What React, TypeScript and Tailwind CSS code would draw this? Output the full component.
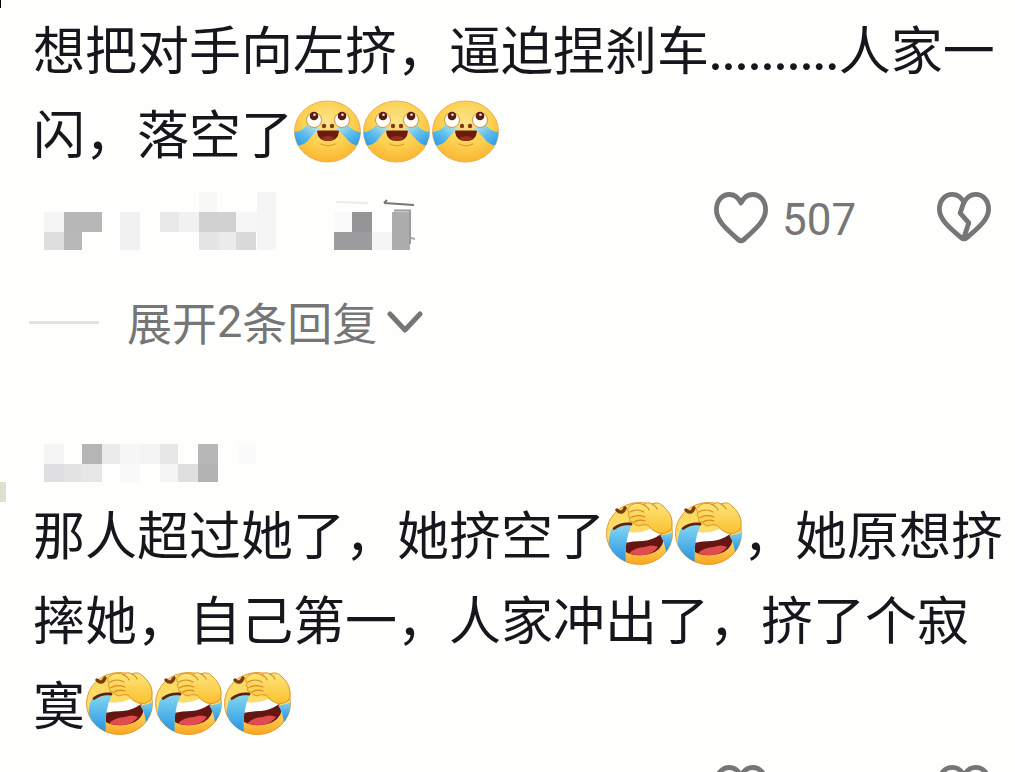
import React from 'react';

interface MosaicCell {
  x: number;
  y: number;
  w: number;
  h: number;
  fill: string;
}

const authorCells: MosaicCell[] = [
  { x: 44, y: 20, w: 20, h: 20, fill: '#f5f5f5' },
  { x: 64, y: 20, w: 38, h: 20, fill: '#b7b7b7' },
  { x: 44, y: 40, w: 20, h: 18, fill: '#dddddd' },
  { x: 64, y: 40, w: 18, h: 18, fill: '#b9b9b9' },
  { x: 120, y: 20, w: 20, h: 38, fill: '#f1f1f1' },
  { x: 160, y: 20, w: 19, h: 20, fill: '#e9e9e9' },
  { x: 179, y: 20, w: 20, h: 20, fill: '#f1f1f1' },
  { x: 199, y: 0, w: 18, h: 20, fill: '#f8f8f7' },
  { x: 199, y: 20, w: 37, h: 20, fill: '#d1d1d1' },
  { x: 199, y: 40, w: 20, h: 18, fill: '#e4e4e4' },
  { x: 219, y: 40, w: 17, h: 18, fill: '#ebebeb' },
  { x: 236, y: 20, w: 21, h: 20, fill: '#f6f6f6' },
  { x: 236, y: 40, w: 20, h: 18, fill: '#dadada' },
  { x: 257, y: 0, w: 19, h: 58, fill: '#f5f5f5' },
  { x: 334, y: 20, w: 18, h: 20, fill: '#fafafa' },
  { x: 352, y: 20, w: 20, h: 20, fill: '#959597' },
  { x: 334, y: 40, w: 38, h: 18, fill: '#9c9b9e' },
  { x: 372, y: 40, w: 20, h: 18, fill: '#f5f5f5' },
  { x: 392, y: 20, w: 18, h: 38, fill: '#acacac' },
];

const nameCells: MosaicCell[] = [
  { x: 44, y: 0, w: 20, h: 20, fill: '#f5f5f5' },
  { x: 82, y: 0, w: 20, h: 20, fill: '#b5b5b5' },
  { x: 102, y: 0, w: 18, h: 20, fill: '#ebebeb' },
  { x: 120, y: 0, w: 20, h: 20, fill: '#f7f7f7' },
  { x: 140, y: 0, w: 20, h: 20, fill: '#f3f3f3' },
  { x: 160, y: 0, w: 18, h: 20, fill: '#e7e7e7' },
  { x: 198, y: 0, w: 20, h: 20, fill: '#b7b7b7' },
  { x: 238, y: 0, w: 18, h: 20, fill: '#fbfbfb' },
  { x: 44, y: 20, w: 20, h: 18, fill: '#dfdfe2' },
  { x: 64, y: 20, w: 18, h: 18, fill: '#e3e3e3' },
  { x: 82, y: 20, w: 20, h: 18, fill: '#e7e7e7' },
  { x: 120, y: 20, w: 20, h: 18, fill: '#f9f9f9' },
  { x: 160, y: 20, w: 18, h: 18, fill: '#f5f5f5' },
  { x: 178, y: 20, w: 20, h: 18, fill: '#dfdfdf' },
  { x: 198, y: 20, w: 20, h: 18, fill: '#b3b3b3' },
];

const Cells = ({ cells }: { cells: MosaicCell[] }) => (
  <>
    {cells.map((cell, i) => (
      <rect key={i} x={cell.x} y={cell.y} width={cell.w} height={cell.h} fill={cell.fill} />
    ))}
  </>
);

const TearsOfJoy = () => (
  <svg viewBox="0 0 69 64" className="inline-block h-[64px] w-[69px] align-[-10px]" aria-hidden="true">
    <defs>
      <radialGradient id="face" cx=".5" cy=".35" r=".7">
        <stop offset="0" stopColor="#fbe48a" />
        <stop offset=".55" stopColor="#fcd050" />
        <stop offset="1" stopColor="#f9b02c" />
      </radialGradient>
      <linearGradient id="tear" x1="1" y1="0" x2="0" y2="1">
        <stop offset="0" stopColor="#cfeae0" />
        <stop offset=".5" stopColor="#5dbdec" />
        <stop offset="1" stopColor="#1f93e6" />
      </linearGradient>
      <linearGradient id="tearRight" x1="0" y1="0" x2="1" y2="1">
        <stop offset="0" stopColor="#cfeae0" />
        <stop offset=".5" stopColor="#5dbdec" />
        <stop offset="1" stopColor="#1f93e6" />
      </linearGradient>
      <clipPath id="round">
        <ellipse cx="34.5" cy="31.5" rx="33" ry="30.5" />
      </clipPath>
    </defs>
    <ellipse cx="34.5" cy="31.5" rx="33" ry="30.5" fill="url(#face)" stroke="#eeb052" strokeWidth="1" />
    <g clipPath="url(#round)">
      <path d="M0 32 Q9 32 14 25 Q20 29 28 27 Q22 32 18 37 Q13 46 0 46Z" fill="url(#tear)" />
      <path d="M69 32 Q60 32 55 25 Q49 29 41 27 Q48 32 53 38 Q58 46 69 46Z" fill="url(#tearRight)" />
    </g>
    <circle cx="21" cy="20" r="7.5" fill="#fffdf8" stroke="#b98334" strokeWidth=".8" />
    <circle cx="49" cy="20" r="7.5" fill="#fffdf8" stroke="#b98334" strokeWidth=".8" />
    <circle cx="21" cy="16" r="4.3" fill="#571b13" />
    <circle cx="49" cy="16" r="4.3" fill="#571b13" />
    <circle cx="21.5" cy="14.800" r="1.3" fill="#f5dfd5" />
    <circle cx="49.5" cy="14.800" r="1.3" fill="#f5dfd5" />
    <circle cx="31" cy="26" r="2.2" fill="#7d3a15" />
    <circle cx="39" cy="26" r="2.2" fill="#7d3a15" />
    <path d="M24 31.500 Q24 30.500 26 30.500 H44 Q46 30.500 46 31.500 Q45 41 35 41 Q25 41 24 31.500Z" fill="#6c1c0e" />
    <path d="M28 38 Q35 34 42 38 Q39 41 35 41 Q31 41 28 38Z" fill="#963019" />
    <path d="M28 44 Q35 47.500 42 44" fill="none" stroke="#d99a2c" strokeWidth="1.2" strokeLinecap="round" />
  </svg>
);

const FacePalm = () => (
  <svg viewBox="0 0 69 64" className="inline-block h-[64px] w-[69px] align-[-10px]" aria-hidden="true">
    <defs>
      <linearGradient id="palmFace" x1="0" y1="0" x2="0" y2="1">
        <stop offset="0" stopColor="#fbd95a" />
        <stop offset=".6" stopColor="#fddc70" />
        <stop offset="1" stopColor="#f9a61c" />
      </linearGradient>
      <linearGradient id="palmTear" x1="0" y1="0" x2="0" y2="1">
        <stop offset="0" stopColor="#83d4f0" />
        <stop offset="1" stopColor="#1c8fe3" />
      </linearGradient>
      <linearGradient id="hand" x1="0" y1="0" x2="0" y2="1">
        <stop offset="0" stopColor="#fde57b" />
        <stop offset="1" stopColor="#fbc02f" />
      </linearGradient>
      <clipPath id="palmRound">
        <ellipse cx="34.5" cy="32.5" rx="33" ry="31" />
      </clipPath>
    </defs>
    <ellipse cx="34.5" cy="32.5" rx="33" ry="31" fill="url(#palmFace)" stroke="#e79a35" strokeWidth="1" />
    <g clipPath="url(#palmRound)">
      <path d="M21 40 Q40 41 56 33 Q60 39 57 44 Q52 53 38 54 Q28 55 21 51Z" fill="#661610" />
      <path d="M24 52.500 Q30 46 40 46 Q47 43 53 46 Q48 53 38 54 Q30 54.500 24 52.500Z" fill="#e14d4e" />
      <path d="M23 31 Q36 33 47 27 L56 33 Q48 39 38 40 Q28 40 20 42Z" fill="#ffffff" />
      <path d="M6 29 Q16 24 26 25 Q19 42 21 64 L8 60 Q0 48 6 29Z" fill="url(#palmTear)" />
      <path d="M55 34 Q62 35 69 30 L69 40 Q66 48 61 51 Q60 42 55 34Z" fill="url(#palmTear)" />
    </g>
    <path d="M12 9 Q17 14 20 7" fill="none" stroke="#783c10" strokeWidth="3.4" strokeLinecap="round" />
    <path d="M9 27.500 Q16 22 26 23" fill="none" stroke="#5c2313" strokeWidth="2.800" strokeLinecap="round" />
    <path d="M24 12 Q21 8 25 5 Q31 0 39 4 Q42 0 47 3 Q53 0 58 5 Q66 12 67 20 Q68 27 65 30 Q60 34 53 32 Q46 29 43 24 Q37 23 34 25 Q29 24 28 21 Q23 21 25 17 Q22 15 24 12Z" fill="url(#hand)" stroke="#dd9527" strokeWidth="1" strokeLinejoin="round" />
    <path d="M25 11 Q32 7 39 11 M26 16.500 Q32 13 40 16 M29 21 Q34 18 40 20 M39 4 Q43 6 44 9 M47 3 Q51 5 52 8" fill="none" stroke="#d48b24" strokeWidth="1.2" strokeLinecap="round" />
  </svg>
);

const HeartIcon = ({ broken = false }: { broken?: boolean }) => (
  <svg viewBox="0 0 56 52" className={broken ? 'h-[50px] w-[54px]' : 'h-[52px] w-[54px]'} preserveAspectRatio="none" fill="none" stroke="#767676" strokeWidth="5" strokeLinejoin="round" strokeLinecap="round" aria-hidden="true">
    <path d="M28 11 C25 5 20 2.500 16 2.500 C8 2.500 2.500 9 2.500 18 C2.500 29 14 38 25 47.500 Q28 50 31 47.500 C42 38 53.500 29 53.500 18 C53.500 9 48 2.500 40 2.500 C36 2.500 31 5 28 11Z" />
    {broken && <path d="M28 10 L24 22 L33 32 L28 47" />}
  </svg>
);

const Actions = ({ count }: { count?: string }) => (
  <div className="flex items-start text-[44px] leading-none text-[#767676]">
    <button type="button" aria-label="赞" className="flex w-[223px] items-start gap-[14px] font-[Roboto,sans-serif]">
      <HeartIcon />
      {count && <span className="pt-1.5">{count}</span>}
    </button>
    <button type="button" aria-label="踩">
      <HeartIcon broken />
    </button>
  </div>
);

const App = () => {
  return (
    <main className="relative h-screen overflow-hidden bg-[#fefefd] font-['Noto_Sans_CJK_SC',sans-serif] text-[#16161c]">
      <div className="absolute top-0 left-0 h-2 w-px bg-black" />
      <div className="absolute top-[482px] left-0 h-5 w-1.5 bg-[#dde1d0]" />

      <article className="pt-1.5">
        <p className="pl-[33px] text-[52px] leading-[84px] whitespace-nowrap">
          想把对手向左挤，逼迫捏刹车<span className="font-[Lato,sans-serif] text-[55px] leading-none">..........</span>人家一
          <br />
          闪，落空了<TearsOfJoy /><TearsOfJoy /><TearsOfJoy />
        </p>
        <div className="mt-[18px] flex items-start justify-between pr-6">
          <svg viewBox="0 0 420 58" className="h-[58px] w-[420px]" aria-hidden="true">
            <Cells cells={authorCells} />
            <path d="M336 10 L368 11" stroke="#ececec" strokeWidth="2" />
            <path d="M384 11 L387 8 M384 11 L414 13" fill="none" stroke="#777" strokeWidth="2" />
            <path d="M394 18.500 L410 18.500 L410 52" fill="none" stroke="#9a9a9a" strokeWidth="2" />
            <path d="M411 46 L415 47" stroke="#aaa" strokeWidth="2" />
          </svg>
          <Actions count="507" />
        </div>
        <button type="button" className="mt-[38px] flex items-center pl-[29px] text-[45px] leading-[68px] text-[#767676]">
          <span className="mr-7 h-[3px] w-[70px] bg-[#e2e2e2]" />
          展开<span className="font-[Roboto,sans-serif]">2</span>条回复
          <svg viewBox="0 0 36 24" className="ml-2.5 h-[24px] w-[36px]" fill="none" stroke="#767676" strokeWidth="5" strokeLinecap="round" strokeLinejoin="round" aria-hidden="true">
            <path d="M3 4 L18 20 L33 4" />
          </svg>
        </button>
      </article>

      <article className="mt-[88px]">
        <svg viewBox="0 0 260 38" className="h-[38px] w-[260px]" aria-hidden="true">
          <Cells cells={nameCells} />
        </svg>
        <p className="mt-2 pl-[33px] text-[52px] leading-[85px] whitespace-nowrap">
          那人超过她了，她挤空了<FacePalm /><FacePalm />，她原想挤
          <br />
          摔她，自己第一，人家冲出了，挤了个寂
          <br />
          寞<FacePalm /><FacePalm /><FacePalm />
        </p>
        <div className="mt-5 flex items-start justify-between pr-6">
          <svg viewBox="0 0 420 58" className="h-[58px] w-[420px]" fill="#9a9a9a" aria-hidden="true">
            <rect x="115" y="7" width="4" height="3" />
            <rect x="133" y="7" width="4" height="3" />
            <rect x="188" y="7" width="3" height="3" fill="#dcdcdc" />
            <rect x="247" y="7" width="4" height="3" />
            <rect x="384" y="7" width="4" height="3" />
          </svg>
          <Actions />
        </div>
      </article>
    </main>
  );
};

export default App;
